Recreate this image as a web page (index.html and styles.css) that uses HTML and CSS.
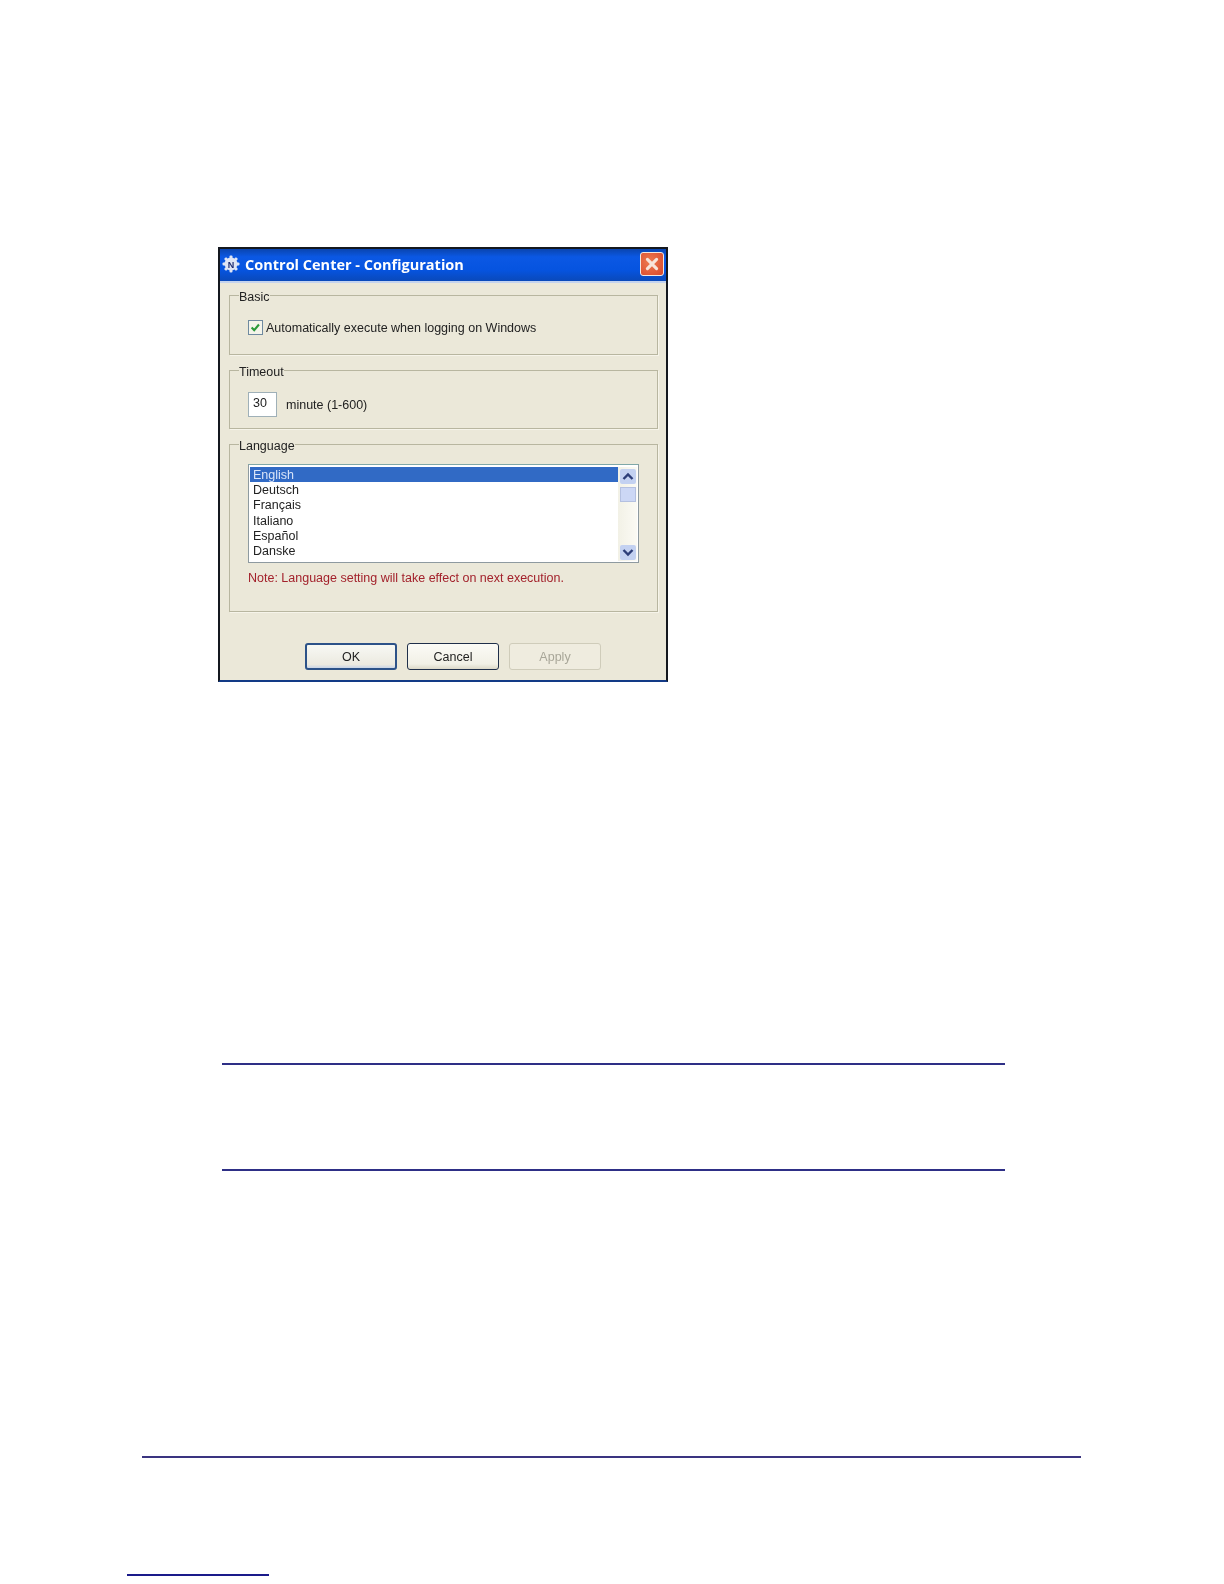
FILE: index.html
```html
<!DOCTYPE html>
<html lang="en">
<head>
  <meta charset="UTF-8" />
  <title>Control Center - Configuration</title>
  <link rel="stylesheet" href="styles.css">
</head>
<body>

<div class="dialog">
  <div class="title-bar">
    <svg class="app-icon" viewBox="0 0 20 20" width="20" height="20">
      <g fill="#dfe5f5">
        <circle cx="10" cy="10" r="6.5"/>
        <rect x="8.5" y="1.5" width="3" height="17" rx="1"/>
        <rect x="1.5" y="8.5" width="17" height="3" rx="1"/>
        <rect x="8.5" y="1.5" width="3" height="17" rx="1" transform="rotate(45 10 10)"/>
        <rect x="8.5" y="1.5" width="3" height="17" rx="1" transform="rotate(-45 10 10)"/>
      </g>
      <text x="10" y="13.5" text-anchor="middle" class="app-icon-letter">N</text>
    </svg>
    <span class="title-text">Control Center - Configuration</span>
    <span class="close-btn">
      <svg viewBox="0 0 24 24" width="24" height="24">
        <path d="M7 7 L17 17 M17 7 L7 17" stroke="#f8e4da" stroke-width="3.4" stroke-linecap="round"/>
      </svg>
    </span>
  </div>

  <div class="dialog-body">
    <fieldset class="group group-basic">
      <legend>Basic</legend>
      <div class="check-row">
        <span class="checkbox">
          <svg viewBox="0 0 15 15" width="15" height="15">
            <path d="M3 7.5 L6 10.5 L11.5 4" fill="none" stroke="#2a9a3a" stroke-width="2.4"/>
          </svg>
        </span>
        <span>Automatically execute when logging on Windows</span>
      </div>
    </fieldset>

    <fieldset class="group group-timeout">
      <legend>Timeout</legend>
      <div class="timeout-row">
        <span class="num-input">30</span>
        <span>minute (1-600)</span>
      </div>
    </fieldset>

    <fieldset class="group group-language">
      <legend>Language</legend>
      <div class="listbox">
        <ul class="lang-list">
          <li class="selected">English</li>
          <li>Deutsch</li>
          <li>Français</li>
          <li>Italiano</li>
          <li>Español</li>
          <li>Danske</li>
        </ul>
        <div class="scrollbar">
          <span class="scroll-btn">
            <svg viewBox="0 0 16 15" width="16" height="15"><path d="M3.5 10 L8 5.5 L12.5 10" fill="none" stroke="#2c3d78" stroke-width="2.4"/></svg>
          </span>
          <span class="scroll-thumb"></span>
          <span class="scroll-track"></span>
          <span class="scroll-btn">
            <svg viewBox="0 0 16 15" width="16" height="15"><path d="M3.5 5 L8 9.5 L12.5 5" fill="none" stroke="#2c3d78" stroke-width="2.4"/></svg>
          </span>
        </div>
      </div>
      <p class="lang-note">Note: Language setting will take effect on next execution.</p>
    </fieldset>

    <div class="buttons">
      <span class="btn btn-default">OK</span>
      <span class="btn">Cancel</span>
      <span class="btn btn-disabled">Apply</span>
    </div>
  </div>
</div>

<div class="note-rules"></div>
<div class="page-rule"></div>
<div class="footnote-rule"></div>

</body>
</html>
```

FILE: styles.css
```css
body {
  margin: 0;
  padding-top: 247px;
  background: #fff;
  font-family: "Liberation Sans", Arial, sans-serif;
}

.dialog {
  box-sizing: border-box;
  width: 450px;
  height: 435px;
  margin-left: 218px;
  border: 2px solid #14181f;
  border-bottom-color: #123a86;
  background: #ebe8d9;
  color: #222;
  font-size: 12.5px;
  filter: blur(0.45px);
}

.title-bar {
  display: flex;
  align-items: center;
  box-sizing: border-box;
  height: 34px;
  padding: 0 2px 2px 1px;
  border-bottom: 2px solid #c4d3ee;
  background: linear-gradient(#0a45b0, #0b58e4 25%, #0654e0 65%, #0a49ba);
}

.app-icon {
  flex: none;
}

.app-icon-letter {
  font: bold 9px "Liberation Sans", sans-serif;
  fill: #1c2a70;
}

.title-text {
  margin-left: 4px;
  font: bold 14.5px "Open Sans", sans-serif;
  color: #fff;
}

.close-btn {
  display: flex;
  margin-left: auto;
  border: 1px solid #f2e8e2;
  border-radius: 3px;
  background: radial-gradient(circle at 40% 40%, #ee7a50, #d8482c);
}

.close-btn svg {
  display: block;
  width: 22px;
  height: 22px;
}

.dialog-body {
  padding: 3px 8px 0 9px;
}

.group {
  box-sizing: border-box;
  margin: 0 0 6px;
  padding: 0 0 0 18px;
  border: 1px solid #b8b6a0;
  box-shadow: 1px 1px 0 #f6f4ea;
}

.group legend {
  margin-left: -9px;
  padding: 4px 0 0;
  line-height: 14px;
}

.group-basic {
  height: 69px;
}

.group-timeout {
  height: 68px;
}

.group-language {
  height: 177px;
  margin-bottom: 31px;
}

.check-row {
  display: flex;
  align-items: center;
  gap: 3px;
  margin-top: 16px;
}

.checkbox {
  display: flex;
  align-items: center;
  justify-content: center;
  box-sizing: border-box;
  width: 15px;
  height: 15px;
  border: 1px solid #6f8aa0;
  background: #f4f4ea;
}

.timeout-row {
  display: flex;
  align-items: center;
  gap: 9px;
  margin-top: 13px;
}

.num-input {
  box-sizing: border-box;
  width: 29px;
  height: 25px;
  padding: 3px 0 0 4px;
  border: 1px solid #9fb0b8;
  background: #fff;
}

.listbox {
  display: flex;
  box-sizing: border-box;
  width: 391px;
  height: 99px;
  margin-top: 11px;
  padding: 2px 1px 1px;
  border: 1px solid #8e9aa0;
  border-top-color: #7fa8a8;
  background: #fff;
}

.lang-list {
  flex: 1;
  margin: 0;
  padding: 0;
  list-style: none;
}

.lang-list li {
  padding: 1px 0 0 3px;
  line-height: 14.2px;
}

.lang-list .selected {
  background: #316ac5;
  color: #d8e4f8;
}

.scrollbar {
  display: flex;
  flex-direction: column;
  box-sizing: border-box;
  width: 19px;
  padding: 2px 1px 1px 2px;
  background: linear-gradient(90deg, #f2f1e6, #fbfaf4);
}

.scroll-btn {
  display: block;
  height: 15px;
  background: #c3d1f1;
  border-radius: 2px;
}

.scroll-btn svg {
  display: block;
}

.scroll-thumb {
  height: 15px;
  margin-top: 3px;
  border: 1px solid #b4c0e0;
  box-sizing: border-box;
  background: #ccd7f5;
}

.scroll-track {
  flex: 1;
}

.lang-note {
  margin: 8px 0 0;
  color: #a3222c;
  line-height: 15px;
}

.buttons {
  display: flex;
  gap: 10px;
  margin-left: 76px;
}

.btn {
  display: flex;
  align-items: center;
  justify-content: center;
  box-sizing: border-box;
  width: 92px;
  height: 27px;
  border: 1px solid #1f2f4a;
  border-radius: 3px;
  background: linear-gradient(#fbfbf6, #f1f0e6 80%, #dcd9c8);
}

.btn-default {
  border-width: 2px;
  border-color: #2c5288;
  background: linear-gradient(#f7f8f4, #eceae0 85%, #c9d4e6);
}

.btn-disabled {
  border-color: #cfccba;
  background: #efecdf;
  color: #a8a698;
}

.note-rules {
  box-sizing: border-box;
  width: 783px;
  height: 108px;
  margin: 381px 0 0 222px;
  border-top: 2px solid #2e2f86;
  border-bottom: 2px solid #2e2f86;
}

.page-rule {
  width: 939px;
  height: 1.5px;
  margin: 285px 0 0 142px;
  background: #3a3480;
}

.footnote-rule {
  width: 142px;
  height: 2px;
  margin: 116px 0 0 127px;
  background: #1a1a8a;
}
```
